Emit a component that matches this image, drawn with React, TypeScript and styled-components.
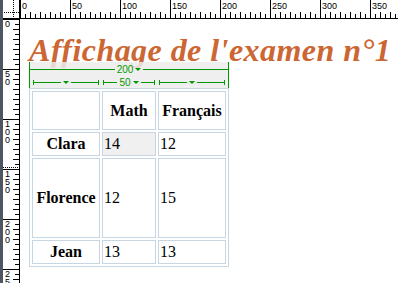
import React from 'react'
import styled, { createGlobalStyle } from 'styled-components'

const GlobalStyle = createGlobalStyle`
  html, body {
    margin: 0;
    background: #fff;
  }
  body {
    font-family: "Liberation Serif", "Times New Roman", serif;
  }
`

const GUIDE = '#009900'
const CELL_LINE = '#c6d6e2'

// Design view window: dark edge, rulers, canvas
const Window = styled.div`
  display: grid;
  grid-template-columns: 3px 17px 1fr;
  grid-template-rows: 19px 1fr;
  width: 398px;
  height: 283px;
  overflow: hidden;
  background: #fff;
`

const Edge = styled.div`
  grid-row: 1 / 3;
  background: #4d5763;
`

const Corner = styled.div`
  border-right: 1px solid #000;
  border-bottom: 1px solid #000;
  box-sizing: border-box;
`

const TopRuler = styled.div`
  border-bottom: 1px solid #000;
  box-sizing: border-box;
  overflow: hidden;
`

const SideRuler = styled.div`
  border-right: 1px solid #000;
  box-sizing: border-box;
  overflow: hidden;
`

const RulerLabel = styled.text`
  font-family: "Liberation Sans", Arial, sans-serif;
  font-size: 9px;
  fill: #000;
`

const Canvas = styled.div`
  padding: 13px 0 0 9px;
  overflow: hidden;
`

const Title = styled.h1`
  margin: 0;
  font-family: "Liberation Serif", "Times New Roman", serif;
  font-size: 32px;
  line-height: 36px;
  letter-spacing: 0.45px;
  font-style: italic;
  font-weight: 700;
  color: #cc6633;
  white-space: nowrap;
`

const TableWrap = styled.div`
  position: relative;
  width: 200px;
  margin-top: 20px;
`

// Table width visual aid, drawn over the content above the table
const WidthBar = styled.div`
  position: absolute;
  left: 0;
  bottom: 100%;
  width: 200px;
  height: 26px;
  box-sizing: border-box;
  border-left: 1px solid ${GUIDE};
  border-right: 1px solid ${GUIDE};
  background: rgba(236, 236, 236, 0.85);
`

const TotalRow = styled.div`
  display: flex;
  align-items: center;
  height: 15px;
`

const ColRow = styled.div`
  display: flex;
  align-items: center;
  gap: 2px;
  height: 11px;
  padding: 0 2px;
`

const ColGuide = styled.div<{ $w: number }>`
  display: flex;
  align-items: center;
  width: ${p => p.$w}px;
  padding: 0 1px;
  box-sizing: border-box;
`

const Cap = styled.span`
  width: 1px;
  height: 5px;
  background: ${GUIDE};
`

const Line = styled.span`
  flex: 1;
  height: 1px;
  background: ${GUIDE};
`

const GuideLabel = styled.span`
  display: flex;
  align-items: center;
  padding: 0 2px;
  font-family: "Liberation Sans", Arial, sans-serif;
  font-size: 10px;
  line-height: 10px;
  color: ${GUIDE};
`

const Arrow = styled.span<{ $gap?: boolean }>`
  width: 0;
  height: 0;
  margin-left: ${p => (p.$gap ? 2 : 0)}px;
  border-left: 3px solid transparent;
  border-right: 3px solid transparent;
  border-top: 3px solid ${GUIDE};
`

const Grid = styled.table`
  width: 200px;
  table-layout: fixed;
  border: 1px solid ${CELL_LINE};
  border-spacing: 2px;
  font-size: 16px;
  color: #000;
`

const Row = styled.tr<{ $h: number }>`
  height: ${p => p.$h}px;
`

const Head = styled.th<{ $w?: number }>`
  ${p => (p.$w ? `width: ${p.$w}px;` : '')}
  border: 1px solid ${CELL_LINE};
  padding: 1px;
  font-weight: bold;
  text-align: center;
`

const Cell = styled.td<{ $selected?: boolean }>`
  border: 1px solid ${CELL_LINE};
  padding: 1px;
  text-align: left;
  background: ${p => (p.$selected ? '#f0f0f0' : 'transparent')};
`

function HorizontalTicks() {
  const marks = []
  for (let u = 0; u <= 380; u += 5) {
    const x = u + 0.5
    if (u % 50 === 0) {
      marks.push(<line key={u} x1={x} x2={x} y1={0} y2={18} stroke="#000" />)
      marks.push(<RulerLabel key={'t' + u} x={u + 2} y={9}>{u}</RulerLabel>)
    } else {
      const top = u % 10 === 0 ? 12 : 14
      marks.push(<line key={u} x1={x} x2={x} y1={top} y2={18} stroke="#000" />)
    }
  }
  return (
    <svg width="378" height="18" style={{ display: 'block' }}>
      {marks}
    </svg>
  )
}

function VerticalTicks() {
  const marks = []
  for (let u = 0; u <= 260; u += 5) {
    const y = u + 0.5
    if (u % 50 === 0) {
      marks.push(<line key={u} x1={0} x2={16} y1={y} y2={y} stroke="#000" />)
      String(u).split('').forEach((d, i) => {
        marks.push(
          <RulerLabel key={`d${u}-${i}`} x={2} y={u + 8 + i * 8}>
            {d}
          </RulerLabel>
        )
      })
    } else {
      const left = u % 10 === 0 ? 10 : 12
      marks.push(<line key={u} x1={left} x2={16} y1={y} y2={y} stroke="#000" />)
    }
  }
  return (
    <svg width="16" height="264" style={{ display: 'block' }}>
      {marks}
      <line x1={0} x2={16} y1={148.5} y2={148.5} stroke="#000" strokeDasharray="1 1" />
    </svg>
  )
}

function Crosshair() {
  return (
    <svg width="16" height="18" style={{ display: 'block' }}>
      <line x1={10.5} x2={10.5} y1={0} y2={18} stroke="#000" strokeDasharray="1 1" />
      <line x1={1} x2={16} y1={12.5} y2={12.5} stroke="#000" strokeDasharray="1 1" />
    </svg>
  )
}

const columns = [
  { w: 68, label: '' },
  { w: 54, label: '50' },
  { w: 68, label: '' },
]

const grades = [
  { name: 'Clara', math: '14', fr: '12', h: 24, selected: true },
  { name: 'Florence', math: '12', fr: '15', h: 80 },
  { name: 'Jean', math: '13', fr: '13', h: 24 },
]

export default function App() {
  return (
    <>
      <GlobalStyle />
      <Window>
        <Edge />
        <Corner>
          <Crosshair />
        </Corner>
        <TopRuler>
          <HorizontalTicks />
        </TopRuler>
        <SideRuler>
          <VerticalTicks />
        </SideRuler>
        <Canvas>
          <Title>Affichage de l'examen n°1</Title>
          <TableWrap>
            <WidthBar>
              <TotalRow>
                <Line />
                <GuideLabel>
                  200
                  <Arrow $gap />
                </GuideLabel>
                <Line />
              </TotalRow>
              <ColRow>
                {columns.map((c, i) => (
                  <ColGuide key={i} $w={c.w}>
                    <Cap />
                    <Line />
                    <GuideLabel>
                      {c.label}
                      <Arrow $gap={!!c.label} />
                    </GuideLabel>
                    <Line />
                    <Cap />
                  </ColGuide>
                ))}
              </ColRow>
            </WidthBar>
            <Grid>
              <tbody>
                <Row $h={39}>
                  <Head $w={64}></Head>
                  <Head $w={50}>Math</Head>
                  <Head $w={64}>Français</Head>
                </Row>
                {grades.map(g => (
                  <Row key={g.name} $h={g.h}>
                    <Head>{g.name}</Head>
                    <Cell $selected={g.selected}>{g.math}</Cell>
                    <Cell>{g.fr}</Cell>
                  </Row>
                ))}
              </tbody>
            </Grid>
          </TableWrap>
        </Canvas>
      </Window>
    </>
  )
}
